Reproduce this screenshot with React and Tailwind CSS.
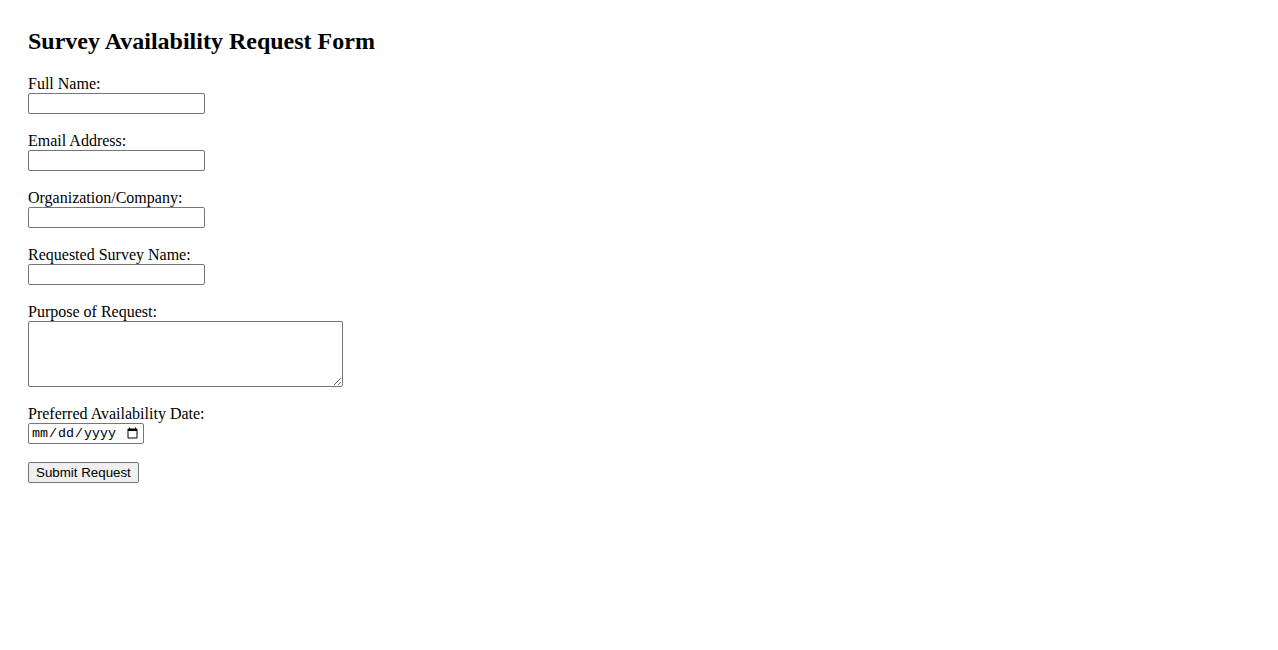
import React from "react";

const fields = [
  { label: "Full Name:", type: "text" },
  { label: "Email Address:", type: "email" },
  { label: "Organization/Company:", type: "text" },
  { label: "Requested Survey Name:", type: "text" },
];

export default function App() {
  return (
    <div className="min-h-screen bg-white px-[28px] pt-[27px] text-black font-['Liberation_Serif','Times_New_Roman',serif]">
      <h2 className="text-[24px] leading-[28px] font-bold mb-[20px]">Survey Availability Request Form</h2>

      <form onSubmit={(e) => e.preventDefault()}>
        {fields.map((f) => (
          <div key={f.label} className="mb-[18px]">
            <label className="block text-[16px] leading-[18px]">{f.label}</label>
            <input
              type={f.type}
              className="block w-[177px] h-[21px] border border-[#767676] rounded-[2px] px-[2px] py-[1px] bg-white text-[13.33px] font-['Liberation_Sans',Arial,sans-serif]"
            />
          </div>
        ))}

        <div className="mb-[18px]">
          <label className="block text-[16px] leading-[18px]">Purpose of Request:</label>
          <textarea className="block w-[315px] h-[66px] border border-[#767676] rounded-[2px] px-[2px] py-[2px] bg-white text-[13.33px] font-['Liberation_Mono',monospace]" />
        </div>

        <div className="mb-[18px]">
          <label className="block text-[16px] leading-[18px]">Preferred Availability Date:</label>
          <input
            type="date"
            className="block w-[116px] h-[21px] border border-[#767676] rounded-[2px] px-[2px] py-[1px] bg-white text-[13.33px] font-['Liberation_Mono',monospace]"
          />
        </div>

        <button
          type="submit"
          className="block h-[21px] border border-[#767676] rounded-[2px] bg-[#efefef] px-[7px] text-[13.33px] leading-[15px] font-['Liberation_Sans',Arial,sans-serif]"
        >
          Submit Request
        </button>
      </form>
    </div>
  );
}
